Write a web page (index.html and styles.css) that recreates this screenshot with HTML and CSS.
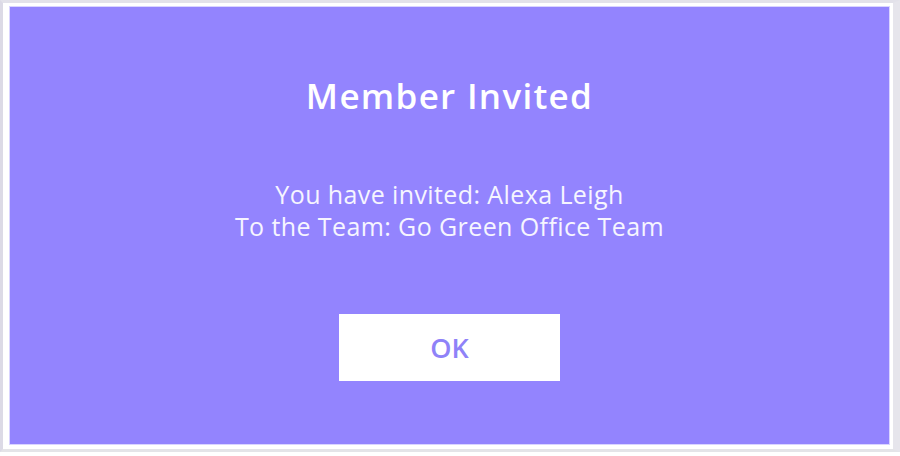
FILE: index.html
```html
<!DOCTYPE html>
<html>
<head>
<meta charset="utf-8">
<link rel="stylesheet" href="styles.css">
</head>
<body>
<div class="frame">
  <div class="dialog">
    <h1 class="title">Member Invited</h1>
    <div class="message">
      <p class="line">You have invited: Alexa Leigh</p>
      <p class="line">To the Team: Go Green Office Team</p>
    </div>
    <button class="ok">OK</button>
  </div>
</div>
</body>
</html>
```
FILE: styles.css
```css
html, body {
  margin: 0;
  padding: 0;
  background: #ffffff;
}
body {
  width: 900px;
  height: 456px;
  overflow: hidden;
  font-family: "Open Sans", "Noto Sans", sans-serif;
}
.frame {
  border-top: 3px solid #e3e2ea;
  border-left: 3px solid #dcdae6;
  border-right: 7px solid #e6e5ec;
  border-bottom: 3px solid #e4e4e8;
  padding: 4px 4px 5px 7px;
  width: 879px;
}
.dialog {
  height: 437px;
  box-sizing: border-box;
  background: #9384fe;
  box-shadow: 0 0 0 1px #d9d4ff;
  display: flex;
  flex-direction: column;
  align-items: center;
  padding-top: 69px;
  color: #ffffff;
}
.title {
  margin: 0;
  font-size: 35px;
  line-height: 40px;
  font-weight: 600;
  letter-spacing: 1.3px;
}
.message {
  margin-top: 62px;
  text-align: center;
}
.line {
  margin: 0;
  font-size: 25px;
  line-height: 32px;
  color: #f6f5ff;
  letter-spacing: 0.4px;
}
.ok {
  margin-top: 72px;
  width: 221px;
  height: 67px;
  border: 0;
  background: #ffffff;
  color: #8f82f8;
  font-family: "Open Sans", "Noto Sans", sans-serif;
  font-size: 27px;
  font-weight: 600;
  padding: 0;
}
```
